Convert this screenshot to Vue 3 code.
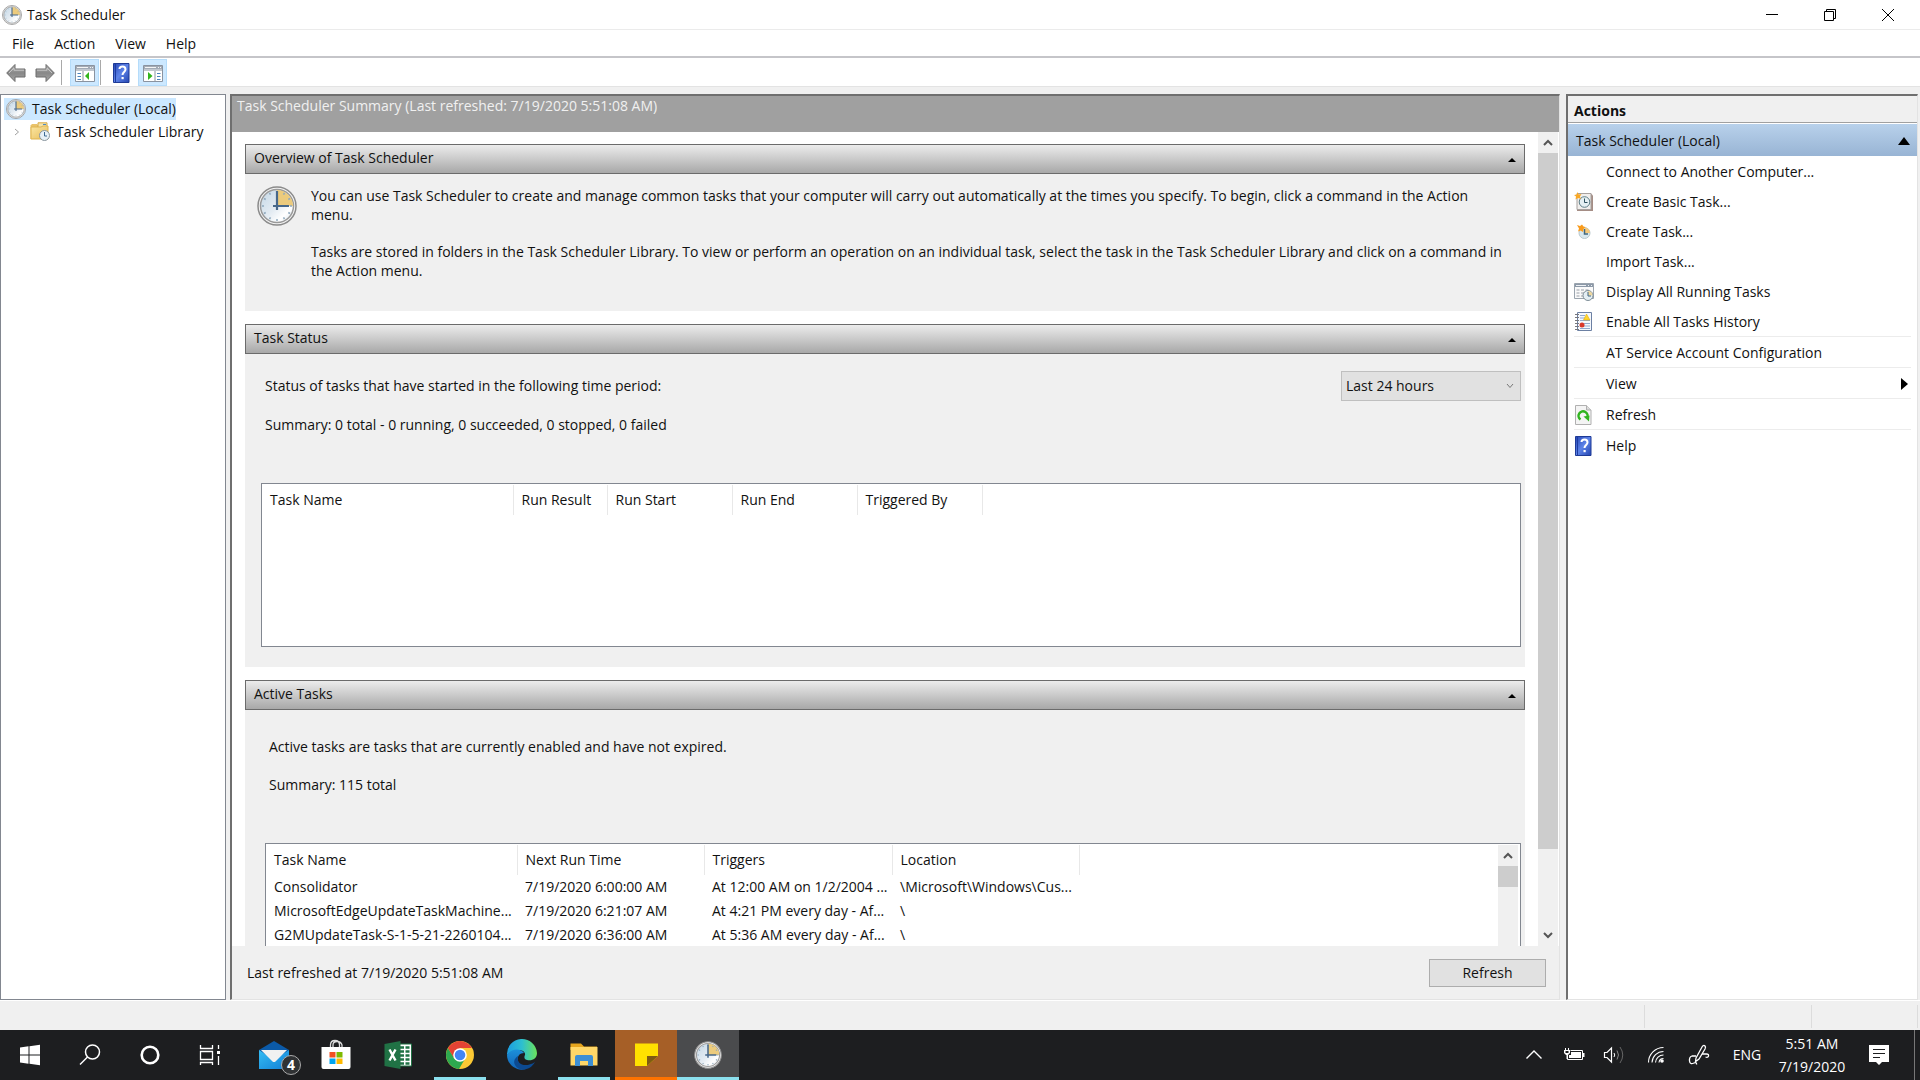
<template>
  <div class="window">
    <header class="titlebar">
      <svg class="ic20"><use href="#clock" /></svg>
      <h1>Task Scheduler</h1>
      <div class="caption">
        <button aria-label="Minimize"><svg width="12" height="12"><path d="M0 5.5H12" /></svg></button>
        <button aria-label="Restore"><svg width="12" height="12"><path d="M.5 2.5H9.5V11.5H.5ZM2.5 2.5V.5H11.5V9.5H9.5" /></svg></button>
        <button aria-label="Close"><svg width="12" height="12"><path d="M0 0L12 12M12 0L0 12" /></svg></button>
      </div>
    </header>

    <nav class="menubar">
      <button v-for="m in menus" :key="m">{{ m }}</button>
    </nav>

    <div class="toolbar">
      <button class="tool arrow" aria-label="Back"><svg class="ic20"><use href="#arrow" /></svg></button>
      <button class="tool arrow" aria-label="Forward"><svg class="ic20 flip"><use href="#arrow" /></svg></button>
      <i class="bar"></i>
      <button class="tool on" aria-label="Show console tree"><svg class="ic20"><use href="#pane-left" /></svg></button>
      <i class="bar tight"></i>
      <button class="tool help" aria-label="Help"><svg class="ic20"><use href="#help" /></svg></button>
      <button class="tool on" aria-label="Show action pane"><svg class="ic20"><use href="#pane-right" /></svg></button>
    </div>

    <main class="panes">
      <aside class="tree">
        <div class="node root"><svg class="ic20"><use href="#clock" /></svg><span>Task Scheduler (Local)</span></div>
        <div class="node child">
          <svg class="twist" width="6" height="8"><path d="M1 1L4.5 4L1 7" /></svg>
          <svg class="ic20"><use href="#library" /></svg><span>Task Scheduler Library</span>
        </div>
      </aside>

      <section class="summary">
        <h2>Task Scheduler Summary (Last refreshed: {{ refreshed }})</h2>
        <div class="viewport">
          <div class="content">
            <article class="group overview">
              <button class="group-head">Overview of Task Scheduler<i class="up"></i></button>
              <div class="group-body">
                <svg class="ic40"><use href="#clock" /></svg>
                <div>
                  <p>You can use Task Scheduler to create and manage common tasks that your computer will carry out automatically at the times you specify. To begin, click a command in the Action menu.</p>
                  <p>Tasks are stored in folders in the Task Scheduler Library. To view or perform an operation on an individual task, select the task in the Task Scheduler Library and click on a command in the Action menu.</p>
                </div>
              </div>
            </article>

            <article class="group status">
              <button class="group-head">Task Status<i class="up"></i></button>
              <div class="group-body">
                <div class="period">
                  <label for="period">Status of tasks that have started in the following time period:</label>
                  <div class="select">
                    <select id="period" v-model="period">
                      <option v-for="p in periods" :key="p">{{ p }}</option>
                    </select>
                    <svg width="8" height="6"><path d="M1 1L4 4.5L7 1" /></svg>
                  </div>
                </div>
                <p>Summary: 0 total - 0 running, 0 succeeded, 0 stopped, 0 failed</p>
                <div class="list">
                  <table>
                    <colgroup><col v-for="c in statusColumns" :key="c.name" :style="{ width: c.width + 'px' }"></colgroup>
                    <thead><tr><th v-for="c in statusColumns" :key="c.name">{{ c.name }}</th></tr></thead>
                  </table>
                </div>
              </div>
            </article>

            <article class="group active">
              <button class="group-head">Active Tasks<i class="up"></i></button>
              <div class="group-body">
                <p>Active tasks are tasks that are currently enabled and have not expired.</p>
                <p>Summary: 115 total</p>
                <div class="list">
                  <table>
                    <colgroup><col v-for="c in activeColumns" :key="c.name" :style="{ width: c.width + 'px' }"></colgroup>
                    <thead><tr><th v-for="c in activeColumns" :key="c.name">{{ c.name }}</th></tr></thead>
                    <tbody>
                      <tr v-for="row in tasks" :key="row[0]"><td v-for="(cell, i) in row" :key="i">{{ cell }}</td></tr>
                    </tbody>
                  </table>
                  <div class="scroll">
                    <svg width="10" height="7"><path d="M1 6L5 2L9 6" /></svg>
                    <i class="thumb"></i>
                  </div>
                </div>
              </div>
            </article>
          </div>
          <div class="scroll main">
            <svg width="10" height="7"><path d="M1 6L5 2L9 6" /></svg>
            <i class="thumb"></i>
            <svg width="10" height="7"><path d="M1 1L5 5L9 1" /></svg>
          </div>
        </div>
        <footer>
          <span>Last refreshed at {{ refreshed }}</span>
          <button>Refresh</button>
        </footer>
      </section>

      <aside class="actions">
        <h2>Actions</h2>
        <button class="scope">Task Scheduler (Local)<svg width="12" height="8"><path d="M6 0L12 8H0Z" /></svg></button>
        <ul>
          <li v-for="a in actions" :key="a.label" :class="{ ruled: a.ruled }">
            <button>
              <span class="slot"><svg v-if="a.icon" class="ic20"><use :href="'#' + a.icon" /></svg></span>
              {{ a.label }}
              <svg v-if="a.submenu" class="more" width="7" height="12"><path d="M0 0L7 6L0 12Z" /></svg>
            </button>
          </li>
        </ul>
      </aside>
    </main>

    <div class="statusbar"><span></span><span></span><span></span></div>

    <div class="taskbar">
      <button v-for="t in pinned" :key="t.icon" class="app" :class="[t.icon, t.state]" :aria-label="t.label">
        <svg width="36" height="36" viewBox="0 0 36 36"><use :href="'#' + t.icon" /></svg>
        <b v-if="t.badge">{{ t.badge }}</b>
      </button>
      <div class="tray">
        <button v-for="t in tray" :key="t.icon" :aria-label="t.label" :class="t.icon">
          <svg width="24" height="24" viewBox="0 0 24 24"><use :href="'#' + t.icon" /></svg>
        </button>
        <button class="lang">ENG</button>
        <button class="time"><span>5:51 AM</span><span>7/19/2020</span></button>
        <button class="note" aria-label="Notifications"><svg width="24" height="24"><path d="M2 2H22V19H15L12 22L9 19H2Z" fill="#fff" /><path d="M6 6.5H18M6 10.5H18M6 14.5H13" stroke="#1d1e20" /></svg></button>
        <i class="peek"></i>
      </div>
    </div>

    <!-- icon sprite -->
    <svg class="sprite" aria-hidden="true">
      <defs>
        <linearGradient id="face" x1="0" y1="0" x2="1" y2="1"><stop offset="0" stop-color="#c3d7e6" /><stop offset=".5" stop-color="#e3ebf2" /><stop offset=".75" stop-color="#fff" /><stop offset="1" stop-color="#d5e2ec" /></linearGradient>
        <linearGradient id="grey" x1="0" y1="0" x2="0" y2="1"><stop offset="0" stop-color="#b5b5b5" /><stop offset=".5" stop-color="#888" /><stop offset="1" stop-color="#a6a6a6" /></linearGradient>
        <linearGradient id="blue" x1="0" y1="0" x2="1" y2="1"><stop offset="0" stop-color="#2546b5" /><stop offset=".5" stop-color="#5d83e8" /><stop offset="1" stop-color="#2445b0" /></linearGradient>
        <linearGradient id="folder-fill" x1="0" y1="0" x2="1" y2="1"><stop offset="0" stop-color="#fbe7a5" /><stop offset="1" stop-color="#e8bd58" /></linearGradient>
        <linearGradient id="edge-a" x1="0" y1="0" x2="1" y2="0"><stop offset="0" stop-color="#1c9de0" /><stop offset=".5" stop-color="#2dbfd0" /><stop offset="1" stop-color="#6be35a" /></linearGradient>
        <linearGradient id="edge-b" x1="0" y1="0" x2="0" y2="1"><stop offset="0" stop-color="#1c90da" /><stop offset="1" stop-color="#1264b8" /></linearGradient>
        <linearGradient id="mail-a" x1="0" y1="0" x2="1" y2="1"><stop offset="0" stop-color="#35bdf3" /><stop offset="1" stop-color="#127fd6" /></linearGradient>
      </defs>
      <symbol id="clock" viewBox="0 0 40 40">
        <circle cx="20" cy="20" r="19" fill="#f4f4f4" stroke="#8b8b8b" stroke-width="1.5" />
        <circle cx="20" cy="20" r="16.5" fill="url(#face)" stroke="#9a9a9a" stroke-width="1.5" />
        <path d="M20 20V4A16 16 0 0 1 36 20Z" fill="#eccb7d" />
        <path d="M20 5V7M20 33V35M5 20H7M33 20H35M12.5 7L13.5 8.7M27.5 7L26.5 8.7M7 12.5L8.7 13.5M33 12.5L31.3 13.5M7 27.5L8.7 26.5M33 27.5L31.3 26.5M12.5 33L13.5 31.3M27.5 33L26.5 31.3" stroke="#8fa9bd" stroke-width="1.5" />
        <path d="M20 5V24M16 20H32" stroke="#47688a" stroke-width="2.2" />
      </symbol>
      <symbol id="arrow" viewBox="0 0 20 20"><path d="M.7 10L9 1.5V6H19V14H9V18.5Z" fill="url(#grey)" stroke="#6c6c6c" /><path d="M3 10L8 5V7.2H18" fill="none" stroke="#c6c6c6" /></symbol>
      <symbol id="pane-left" viewBox="0 0 20 20">
        <path d="M.5 2.5H19.5V18.5H.5Z" fill="#fff" stroke="#8a93a0" /><path d="M1 3H19V8H1Z" fill="#a3abb6" /><path d="M2 4.5H13M15 4.5H16M17 4.5H18" stroke="#f5f5f5" /><path d="M1 7H19" stroke="#dfe3e8" />
        <path d="M2.5 10.5H6M2.5 13.5H6M2.5 16.5H6" stroke="#4b83bd" /><path d="M8 8V18" stroke="#8a93a0" /><path d="M10 13L14 9V17Z" fill="#32b51d" />
      </symbol>
      <symbol id="pane-right" viewBox="0 0 20 20">
        <path d="M.5 2.5H19.5V18.5H.5Z" fill="#fff" stroke="#8a93a0" /><path d="M1 3H19V8H1Z" fill="#a3abb6" /><path d="M2 4.5H13M15 4.5H16M17 4.5H18" stroke="#f5f5f5" /><path d="M1 7H19" stroke="#dfe3e8" />
        <path d="M14 10.5H17.5M14 13.5H17.5M14 16.5H17.5" stroke="#4b83bd" /><path d="M12 8V18" stroke="#8a93a0" /><path d="M9.5 13L5 9V17Z" fill="#32b51d" />
      </symbol>
      <symbol id="help" viewBox="0 0 20 20"><path d="M1.5.5H17V19.5H1.5Z" fill="url(#blue)" stroke="#1e3a96" /><path d="M3.5 1V19" stroke="#1d3b9f" /><path d="M7.5 6Q7.5 3.5 10.5 3.5T13.5 6.5C13.5 9 10.5 9 10.5 12" fill="none" stroke="#fff" stroke-width="2" /><path d="M9.5 14H11.7V16.2H9.5Z" fill="#fff" /></symbol>
      <symbol id="library" viewBox="0 0 20 20">
        <path d="M.5 3.5L2 2H7L8.5 4V17H.5Z" fill="#eac36a" /><path d="M8 .8H17V8H8Z" fill="#f4e2a9" stroke="#d7a944" /><path d="M13 2.5H16" stroke="#4c8bc6" /><path d="M1 5H11L13 4H18V17H1Z" fill="url(#folder-fill)" stroke="#dfb552" />
        <circle cx="14.5" cy="13.5" r="5" fill="#e7f0f6" stroke="#8a969e" /><path d="M14.5 10V14H17" fill="none" stroke="#3e6a92" />
      </symbol>
      <symbol id="basic" viewBox="0 0 20 20">
        <path d="M3 1.5H17L19 3.5V19H3Z" fill="#a58d85" /><path d="M3 1.5H17V17.5H3Z" fill="#f1efed" stroke="#a7a19e" />
        <circle cx="10.5" cy="10" r="5.3" fill="#e5f0f3" stroke="#5e7f88" /><path d="M10.5 6.5V10.5H13.5" fill="none" stroke="#2f5260" /><path d="M3.5 0L4.7 2.5L7.5 2L6 4.5L7 7L4 6L1.5 7.5L2 4.5L0 3L2.7 2.5Z" fill="#f9a825" />
      </symbol>
      <symbol id="task" viewBox="0 0 20 20"><circle cx="10.5" cy="11" r="5.5" fill="#d8e8ee" stroke="#b9c8cd" /><path d="M10.5 11V5.5A5.5 5.5 0 0 1 16 11Z" fill="#f6c97a" /><path d="M10.5 7V12H14" fill="none" stroke="#42677c" stroke-width="1.5" /><path d="M3 3L6 4L8 2.5L9.5 4.5L11.5 5L9.5 7L9 10L6.5 8.5L4 9.5L5 6.5Z" fill="#f99b1c" /></symbol>
      <symbol id="running" viewBox="0 0 20 20"><path d="M.5 1.5H19.5V16.5H.5Z" fill="#fafafa" stroke="#9ba4ae" /><path d="M1 2H19V5H1Z" fill="#8c99a8" /><path d="M2 3.5H12M14 3.5H15M17 3.5H18" stroke="#eef1f4" /><path d="M2.5 8H16M2.5 11H16M2.5 14H16" stroke="#999fa8" stroke-dasharray="3 1.5" /><circle cx="14" cy="13.5" r="5" fill="#e4eef3" stroke="#7d8d97" /><path d="M14 13.5V9A4.5 4.5 0 0 1 18.5 13.5Z" fill="#efd79e" /><path d="M14 10V14H17" fill="none" stroke="#3c6482" /></symbol>
      <symbol id="history" viewBox="0 0 20 20"><path d="M3.5.5H17.5V18.5H3.5Z" fill="#f5f8fd" stroke="#6c80a3" /><path d="M6 3.5H11M6 6H11M6 8.5H16M10 11.5H16M10 14H16M6 16.5H16" stroke="#92a8ce" /><path d="M12.5 2L16 8H9.5Z" fill="#ffd52e" stroke="#dda900" stroke-width=".5" /><circle cx="8" cy="13" r="2.5" fill="#d8362a" /><path d="M1 2.5H5M1 5.5H5M1 8.5H5M1 11.5H5M1 14.5H5M1 17.5H5" stroke="#77777c" /></symbol>
      <symbol id="refresh" viewBox="0 0 20 20"><path d="M1.5.5H12.5L17 5V19.5H1.5Z" fill="#f4f4f4" stroke="#b0b0b0" /><path d="M12.5.5V5H17" fill="#dcdcdc" stroke="#b0b0b0" /><path d="M6.5 14.5A4.5 4.5 0 1 1 13 13" fill="none" stroke="#31b520" stroke-width="2.5" /><path d="M9.5 11.5L15.5 10.5L15 16.5Z" fill="#31b520" /></symbol>

      <symbol id="start" viewBox="0 0 36 36"><path d="M8 10.5L16.5 9.3V17.5H8ZM17.5 9.2L28 7.8V17.5H17.5ZM8 18.5H16.5V26.7L8 25.5ZM17.5 18.5H28V28.2L17.5 26.8Z" fill="#fff" /></symbol>
      <symbol id="search" viewBox="0 0 36 36"><g fill="none" stroke="#fff" stroke-width="1.5"><circle cx="20.5" cy="15" r="7" /><path d="M15.5 20L8 27.5" /></g></symbol>
      <symbol id="cortana" viewBox="0 0 36 36"><circle cx="18" cy="18" r="8.3" fill="none" stroke="#fff" stroke-width="2.6" /></symbol>
      <symbol id="taskview" viewBox="0 0 36 36"><path d="M8.5 8V11.5H20.5V8M8.5 14.5H20.5V22.5H8.5ZM8.5 28V25.5H20.5V28M26.5 8V12M26.5 19V28" fill="none" stroke="#fff" stroke-width="1.3" /><path d="M25 14H28V17H25Z" fill="#fff" /></symbol>
      <symbol id="mail" viewBox="0 0 36 36"><path d="M3 13L18 4L33 13V23H3Z" fill="#0b5aa8" /><path d="M3 13V32H33V13L18 23Z" fill="url(#mail-a)" /><path d="M5 13H31L19.500 24.500Q18 25.500 16.500 24.500Z" fill="#f1f1f1" /></symbol>
      <symbol id="store" viewBox="0 0 36 36"><path d="M12.5 10V8Q12.5 3.500 17 3.500T21.500 8V10M15 10V8Q15 4.500 19 4.500T24 8V10" fill="none" stroke="#ddd" stroke-width="1.300" /><path d="M3.5 10H32.5V30Q32.5 32 30.5 32H5.5Q3.5 32 3.5 30Z" fill="#fff" /><path d="M11.5 15H17.5V20.500H11.5Z" fill="#f25022" /><path d="M18.5 15H24.5V20.500H18.5Z" fill="#7fba00" /><path d="M11.5 21.500H17.5V27H11.5Z" fill="#00a4ef" /><path d="M18.5 21.500H24.5V27H18.5Z" fill="#ffb900" /></symbol>
      <symbol id="excel" viewBox="0 0 36 36"><path d="M18 7H31.5V29H18Z" fill="#fff" stroke="#207245" /><path d="M20 10.5H30M20 14.5H30M20 18.5H30M20 22.5H30M20 26.5H30" stroke="#207245" stroke-width="2.5" stroke-dasharray="4 1.5" /><path d="M4.5 7L20.5 4V32L4.5 29Z" fill="#207245" /><path d="M9.500 12.5L15.500 23.5M15.500 12.5L9.500 23.5" stroke="#fff" stroke-width="2.4" /></symbol>
      <symbol id="chrome" viewBox="0 0 36 36"><circle cx="18" cy="18" r="14" fill="#fbc934" /><path d="M5.9 11A14 14 0 0 0 17 32L23.5 21L12.4 21.2Z" fill="#2da94f" /><path d="M18 11H30.1A14 14 0 0 0 5.9 11L12 21Z" fill="#e44334" /><circle cx="18" cy="18" r="6.8" fill="#fff" /><circle cx="18" cy="18" r="5.3" fill="#4285f4" /></symbol>
      <symbol id="edge" viewBox="0 0 36 36"><path d="M3 18A15 15 0 0 1 33 16C33 22 28 24 23 23C20 22 20 20 21 18C22 14 14 9 3 18Z" fill="url(#edge-a)" /><path d="M3 18C7 11 17 11 20 16C15 16 13 20 14 24C15 29 20 33 24 31C15 36 3 29 3 18Z" fill="url(#edge-b)" /><path d="M14 19C12 28 22 31 31 25C26 34 15 35 11 28C9 24 11 21 14 19Z" fill="#0c4a91" /></symbol>
      <symbol id="explorer" viewBox="0 0 36 36"><path d="M4.5 6.5H15L18 9.5H31V13H4.5Z" fill="#e5a51e" /><path d="M4.5 10H31.5V28.5H4.5Z" fill="#ffd768" /><path d="M9 29V20Q9 18 11 18H25Q27 18 27 20V29H22V24H14V29Z" fill="#3d8fd4" /></symbol>
      <symbol id="sticky" viewBox="0 0 36 36"><path d="M7 6.5H30V19L19 29H7Z" fill="#ffe100" /><path d="M19 19H30L19 29Z" fill="#7e5b13" /></symbol>
      <symbol id="scheduler" viewBox="0 0 36 36"><use href="#clock" x="4" y="4" width="28" height="28" /></symbol>

      <symbol id="chevron" viewBox="0 0 24 24"><path d="M4.5 15.5L12 8L19.5 15.5" fill="none" stroke="#fff" stroke-width="1.4" /></symbol>
      <symbol id="battery" viewBox="0 0 24 24"><path d="M8.5 7.5H20.5V16.5H5.5V12" fill="none" stroke="#fff" /><path d="M9 9H19V15H7V12H9ZM21 10H22.5V14H21ZM2 7H8V10L6 12H4L2 10Z" fill="#fff" /><path d="M3.5 8H6.500V10H3.500Z" fill="#1d1e20" /><path d="M3.5 5V8M6.5 5V8M5 12V16" stroke="#fff" /></symbol>
      <symbol id="volume" viewBox="0 0 24 24"><path d="M2.5 9.5H5L9.5 5V19L5 14.5H2.5Z" fill="none" stroke="#fff" stroke-width="1.2" /><path d="M12 10Q13.5 12 12 14" fill="none" stroke="#fff" /><path d="M15 7.5Q18 12 15 16.5" fill="none" stroke="#888" /><path d="M18 4Q23.5 12 18 20" fill="none" stroke="#666" /></symbol>
      <symbol id="wifi" viewBox="0 0 24 24"><g fill="none" stroke="#fff" stroke-width="1.1"><path d="M4.5 19.5A15 15 0 0 1 19.5 4.5M8 19.5A11.5 11.5 0 0 1 19.5 8.5M11.5 19.5A8 8 0 0 1 19.5 12M15 19.5A4.5 4.5 0 0 1 19.5 15.5" /></g><circle cx="18" cy="18" r="1.8" fill="#fff" /></symbol>
      <symbol id="pen" viewBox="0 0 24 24"><path d="M9 15L15 4Q16.5 1.5 18 3Q19 4 18 6L12 16L8.5 18.5ZM15 11H19.5Q22 11 21.5 13T18.5 14M9 13H5Q2 14 2.5 18T7 20Q10 19 9.5 21.5" fill="none" stroke="#fff" stroke-width="1.3" /></symbol>
    </svg>
  </div>
</template>

<script setup>
import { ref } from 'vue'

const refreshed = '7/19/2020 5:51:08 AM'
const menus = ['File', 'Action', 'View', 'Help']

const periods = ['Last hour', 'Last 24 hours', 'Last 7 days', 'Last 30 days']
const period = ref('Last 24 hours')

const statusColumns = [
  { name: 'Task Name', width: 251 },
  { name: 'Run Result', width: 94 },
  { name: 'Run Start', width: 125 },
  { name: 'Run End', width: 125 },
  { name: 'Triggered By', width: 125 }
]

const activeColumns = [
  { name: 'Task Name', width: 251 },
  { name: 'Next Run Time', width: 187 },
  { name: 'Triggers', width: 188 },
  { name: 'Location', width: 187 }
]

const tasks = [
  ['Consolidator', '7/19/2020 6:00:00 AM', 'At 12:00 AM on 1/2/2004 ...', '\\Microsoft\\Windows\\Cus...'],
  ['MicrosoftEdgeUpdateTaskMachine...', '7/19/2020 6:21:07 AM', 'At 4:21 PM every day - Af...', '\\'],
  ['G2MUpdateTask-S-1-5-21-2260104...', '7/19/2020 6:36:00 AM', 'At 5:36 AM every day - Af...', '\\']
]

const actions = [
  { label: 'Connect to Another Computer...' },
  { label: 'Create Basic Task...', icon: 'basic' },
  { label: 'Create Task...', icon: 'task' },
  { label: 'Import Task...' },
  { label: 'Display All Running Tasks', icon: 'running' },
  { label: 'Enable All Tasks History', icon: 'history' },
  { label: 'AT Service Account Configuration', ruled: true },
  { label: 'View', ruled: true, submenu: true },
  { label: 'Refresh', icon: 'refresh', ruled: true },
  { label: 'Help', icon: 'help', ruled: true }
]

const pinned = [
  { icon: 'start', label: 'Start' },
  { icon: 'search', label: 'Search' },
  { icon: 'cortana', label: 'Cortana' },
  { icon: 'taskview', label: 'Task View' },
  { icon: 'mail', label: 'Mail', badge: 4 },
  { icon: 'store', label: 'Store' },
  { icon: 'excel', label: 'Excel' },
  { icon: 'chrome', label: 'Chrome', state: 'running' },
  { icon: 'edge', label: 'Edge' },
  { icon: 'explorer', label: 'File Explorer', state: 'running' },
  { icon: 'sticky', label: 'Sticky Notes', state: 'alert' },
  { icon: 'scheduler', label: 'Task Scheduler', state: 'current' }
]

const tray = [
  { icon: 'chevron', label: 'Show hidden icons' },
  { icon: 'battery', label: 'Battery' },
  { icon: 'volume', label: 'Volume' },
  { icon: 'wifi', label: 'Network' },
  { icon: 'pen', label: 'Windows Ink' }
]
</script>

<style>
body {
  margin: 0;
  overflow: hidden;
}
</style>

<style scoped>
.window {
  display: flex;
  flex-direction: column;
  height: 100vh;
  background: #f0f0f0;
  color: #111;
  font: 14px/20px "Open Sans", "Noto Sans", sans-serif;
}
.window * {
  box-sizing: border-box;
}
button {
  margin: 0;
  padding: 0;
  border: 0;
  background: none;
  color: inherit;
  font: inherit;
}
h1, h2, p, ul {
  margin: 0;
  padding: 0;
  font: inherit;
}
svg {
  display: block;
  flex: none;
}
.sprite {
  position: absolute;
  width: 0;
  height: 0;
}
.ic20 {
  width: 20px;
  height: 20px;
}
.ic40 {
  width: 40px;
  height: 40px;
}
.flip {
  transform: scaleX(-1);
}

.titlebar {
  display: flex;
  align-items: center;
  gap: 5px;
  height: 30px;
  padding: 0 3px 0 2px;
  background: #fff;
  border-bottom: 1px solid #ebebeb;
}
.caption {
  display: flex;
  margin-left: auto;
}
.caption button {
  display: flex;
  align-items: center;
  justify-content: center;
  width: 58px;
  height: 28px;
}
.caption path {
  fill: none;
  stroke: #000;
}
.menubar {
  display: flex;
  gap: 20px;
  height: 28px;
  padding: 2px 0 0 12px;
  background: #fff;
  border-bottom: 2px solid #c5c5c9;
}
.toolbar {
  display: flex;
  align-items: center;
  height: 29px;
  padding: 1px 0 0 6px;
  background: #fff;
  border-bottom: 1px solid #e3e3e3;
}
.tool {
  display: flex;
  align-items: center;
  justify-content: center;
  width: 29px;
  height: 27px;
}
.tool.arrow {
  justify-content: flex-start;
}
.tool.on {
  background: #cce8ff;
  border: 1px solid #b5dcfa;
}
.tool.help {
  width: 37px;
  padding-left: 4px;
}
.bar {
  width: 1px;
  height: 25px;
  margin-right: 8px;
  margin-left: -3px;
  background: #a9a9a9;
}
.bar.tight {
  margin: 0 0 0 1px;
}

.panes {
  display: grid;
  flex: 1;
  grid-template-columns: 226px minmax(0, 1fr) 352px;
  min-height: 0;
  padding: 7px 2px 0 0;
}
.tree {
  padding: 3px;
  background: #fff;
  border: 1px solid #828790;
}
.node {
  display: flex;
  align-items: center;
  height: 22px;
  white-space: nowrap;
}
.root {
  width: 172px;
  padding-left: 2px;
  gap: 6px;
  background: #cce8ff;
}
.child {
  margin-top: 1px;
  padding-left: 10px;
  gap: 6px;
}
.twist {
  margin-right: 4px;
}
.twist path {
  fill: none;
  stroke: #a0a0a0;
}

.summary {
  display: flex;
  flex-direction: column;
  min-width: 0;
  min-height: 0;
  margin: 0 6px 0 4px;
  border: 1px solid #e3e3e3;
  border-top: 2px solid #6f6f6f;
  border-left: 2px solid #6f6f6f;
}
.summary h2 {
  height: 36px;
  padding-left: 5px;
  background: #a0a0a0;
  color: #f0f0f0;
}
.viewport {
  display: flex;
  flex: 1;
  min-height: 0;
  overflow: hidden;
  background: #fff;
}
.content {
  flex: 1;
  min-width: 0;
  padding: 12px 13px;
}
.group {
  margin-bottom: 13px;
  background: #f0f0f0;
}
.group-head {
  display: flex;
  align-items: center;
  justify-content: space-between;
  width: 100%;
  height: 30px;
  padding: 0 8px 3px;
  background: linear-gradient(#ececec, #a8a8a8);
  border: 1px solid #6b6b6b;
}
.up {
  border: 4px solid transparent;
  border-top: 0;
  border-bottom-color: #000;
  margin-top: 5px;
}
.overview .group-body {
  display: flex;
  gap: 14px;
  height: 137px;
  padding: 12px 20px 0 12px;
  line-height: 19px;
}
.overview p {
  margin-bottom: 18px;
}
.status .group-body {
  height: 313px;
  padding: 17px 4px 0 16px;
}
.status .period, .status p {
  padding-left: 4px;
}
.period {
  display: flex;
  align-items: center;
  justify-content: space-between;
}
.select {
  display: flex;
  align-items: center;
  width: 180px;
  height: 30px;
  padding-right: 6px;
  background: #e1e1e1;
  border: 1px solid #bfbfbf;
}
.select select {
  flex: 1;
  height: 28px;
  padding: 0 4px;
  border: 0;
  background: none;
  color: inherit;
  font: inherit;
  appearance: none;
}
.select path {
  fill: none;
  stroke: #777;
}
.status p {
  margin-top: 14px;
}
.list {
  display: flex;
  background: #fff;
  border: 1px solid #828790;
}
.status .list {
  height: 164px;
  margin-top: 48px;
  padding-top: 1px;
}
.active .group-body {
  padding: 27px 4px 0 20px;
}
.active p {
  padding-left: 4px;
  margin-bottom: 18px;
}
.active .list {
  height: 240px;
  margin-top: 48px;
  padding: 1px 2px 1px 0;
}
table {
  table-layout: fixed;
  width: 0;
  height: min-content;
  border-collapse: collapse;
}
th, td {
  height: 24px;
  padding: 0 0 0 8px;
  font-weight: 400;
  text-align: left;
  white-space: nowrap;
}
th {
  height: 30px;
  border-right: 1px solid #e8e8e8;
}

.scroll {
  display: flex;
  flex-direction: column;
  align-items: center;
  width: 20px;
  margin-left: auto;
  padding: 7px 0;
  background: #f0f0f0;
}
.scroll path {
  fill: none;
  stroke: #555;
  stroke-width: 2;
}
.thumb {
  width: 20px;
  height: 21px;
  margin-top: 7px;
  background: #cdcdcd;
}
.scroll.main {
  margin-right: 1px;
}
.main .thumb {
  flex: 0 0 696px;
}
.main svg:last-child {
  margin-top: auto;
}
.summary footer {
  display: flex;
  align-items: center;
  justify-content: space-between;
  height: 53px;
  padding: 0 13px 0 15px;
}
.summary footer button {
  width: 117px;
  height: 28px;
  background: #e1e1e1;
  border: 1px solid #adadad;
}

.actions {
  min-width: 0;
  background: #fff;
  border: 1px solid #e3e3e3;
  border-top: 2px solid #6f6f6f;
  border-left: 2px solid #6f6f6f;
}
.actions h2 {
  height: 27px;
  padding: 5px 6px 0;
  background: #f0f0f0;
  border-bottom: 1px solid #a0a0a0;
  font-weight: 700;
}
.scope {
  display: flex;
  align-items: center;
  justify-content: space-between;
  width: 100%;
  height: 32px;
  margin-top: 1px;
  padding: 1px 7px 0 8px;
  background: linear-gradient(#b8d1eb, #98b4d4);
}
.actions ul {
  padding: 0 6px;
  list-style: none;
}
.actions li button {
  display: flex;
  align-items: center;
  width: 100%;
  height: 30px;
  padding-top: 1px;
  white-space: nowrap;
}
.ruled {
  border-top: 1px solid #ececec;
}
.slot {
  width: 32px;
}
.more {
  margin-right: 3px;
  margin-left: auto;
}

.statusbar {
  display: flex;
  justify-content: flex-end;
  height: 30px;
  padding: 4px 2px 2px 0;
  border-top: 1px solid #fff;
}
.statusbar span {
  width: 106px;
  border-right: 1px solid #dcdcdc;
}
.statusbar span:nth-child(2) {
  width: 167px;
}

.taskbar {
  display: flex;
  height: 50px;
  background: #1d1e20;
  color: #fff;
}
.app {
  display: flex;
  position: relative;
  align-items: center;
  justify-content: center;
  width: 62px;
  border-bottom: 3px solid transparent;
  padding-top: 3px;
}
.app.start, .app.search, .app.cortana, .app.taskview {
  width: 60px;
}
.app b {
  position: absolute;
  right: 4px;
  bottom: 2px;
  width: 20px;
  height: 20px;
  border: 1px solid #aaa;
  border-radius: 50%;
  background: #303234;
  line-height: 18px;
}
.app.mail {
  margin-left: 3px;
}
.app.running {
  width: 52px;
  margin: 0 5px;
  border-color: #8be0ee;
}
.app.alert {
  background: #a65f27;
  border-color: #ff7300;
}
.app.current {
  background: #4a4b4d;
  border-color: #8be0ee;
}
.tray {
  display: flex;
  align-items: center;
  margin-left: auto;
}
.tray button {
  display: flex;
  align-items: center;
  justify-content: center;
  width: 40px;
  height: 50px;
}
.tray .wifi, .tray .pen {
  width: 43px;
}
.tray .lang {
  width: 54px;
}
.tray .time {
  flex-direction: column;
  width: 76px;
  line-height: 23px;
}
.tray .note {
  width: 58px;
  margin-right: 6px;
}
.peek {
  width: 6px;
  height: 50px;
  border-left: 1px solid #777;
}
</style>
